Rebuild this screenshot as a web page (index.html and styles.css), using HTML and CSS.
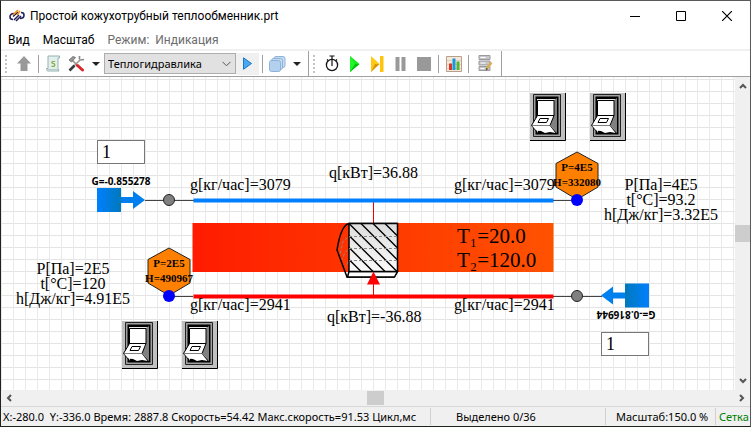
FILE: index.html
```html
<!DOCTYPE html>
<html lang="ru">
<head>
<meta charset="utf-8">
<title>Простой кожухотрубный теплообменник.prt</title>
<link rel="stylesheet" href="styles.css">
</head>
<body>
<div class="window">
  <header class="titlebar">
    <svg class="app-icon" width="16" height="14" viewBox="0 0 16 14" fill="none">
      <path d="M5 4.500C2 4.500 1 6 1 8c0 1.500 1 2.500 3 2.500M4 7.500 9 3M5 11 10 6M7 12l5-5M11 9.500c3 0 4-1.500 4-3.500 0-1.500-1-2.500-3-2.500" stroke="#25245e" stroke-width="1.600"/>
      <path d="M4 6 9 1M8 6l3-4" stroke="#ee8c1e" stroke-width="1.600"/>
    </svg>
    <h1 class="title">Простой кожухотрубный теплообменник.prt</h1>
    <div class="window-controls">
      <button class="window-button" aria-label="Свернуть"><svg width="10" height="10"><path d="M0 5.500h10" stroke="#000"/></svg></button>
      <button class="window-button" aria-label="Развернуть"><svg width="10" height="10"><path d="M.5 .5h9v9h-9z" fill="none" stroke="#000"/></svg></button>
      <button class="window-button" aria-label="Закрыть"><svg width="10" height="10"><path d="M0 0l10 10M10 0 0 10" stroke="#000" stroke-width="1.200"/></svg></button>
    </div>
  </header>

  <nav class="menu">
    <button class="menu-item">Вид</button>
    <button class="menu-item">Масштаб</button>
    <button class="menu-item" disabled>Режим:&nbsp; Индикация</button>
  </nav>

  <div class="toolbars">
    <div class="toolbar">
      <span class="grip"></span>
      <button class="tool" aria-label="Вверх"><svg width="14" height="16" viewBox="0 0 14 16"><path d="M7 0l7 7.500h-3.500V15h-7V7.500H0z" fill="#999"/></svg></button>
      <span class="separator"></span>
      <button class="tool" aria-label="Скрипт"><svg width="15" height="17" viewBox="0 0 15 17"><path d="M2 1h11.500v2H12v10.500l1 2.500H1.500L.5 13.500H2z" fill="#e3efed" stroke="#94b1b1"/><path d="M2 14.500h10" stroke="#b8cccc"/><path d="M9 6.500H7q-1.800.2-1 1.500L8.500 9q1 1.800-.8 2.300H5.500" fill="none" stroke="#86ad3f" stroke-width="1.200"/></svg></button>
      <button class="tool" aria-label="Инструменты"><svg width="17" height="17" viewBox="0 0 17 17" fill="none"><path d="M3 14 12.500 4.500" stroke="#999" stroke-width="1.600"/><path d="M1.500 15.500 6.500 10.500" stroke="#3b3b3b" stroke-width="2.600"/><path d="M11.500 4.500V1M12.500 5l3.500-.5" stroke="#888" stroke-width="1.600"/><path d="M4 5 9 10" stroke="#a08c7c" stroke-width="1.600"/><path d="M1 5 5 1.500l2.500 1L3.500 7z" fill="#999" stroke="#666" stroke-width=".8"/><path d="M9.500 10.500l5 4.500" stroke="#d8262b" stroke-width="3" stroke-linecap="round"/></svg></button>
      <button class="tool-menu" aria-label="Меню инструментов"><svg width="8" height="4"><path d="M0 0h8L4 4z" fill="#222"/></svg></button>
      <div class="select-box">
        <select class="select" aria-label="Решатель"><option>Теплогидравлика</option></select>
        <svg class="chevron" width="9" height="6" viewBox="0 0 9 6"><path d="M.5 .8l4 4 4-4" fill="none" stroke="#555"/></svg>
      </div>
      <button class="tool tool-shaded" aria-label="Выполнить"><svg width="9" height="13" viewBox="0 0 9 13"><path d="M.5 .8v11.500L8.500 6.500z" fill="#48a8f0" stroke="#1e76c8"/></svg></button>
      <span class="separator"></span>
      <button class="tool" aria-label="Слои"><svg width="17" height="16" viewBox="0 0 17 16" stroke="#8fb3d8"><rect x="5" y=".5" width="11" height="11" rx="2" fill="#c5dcf2"/><rect x="2.500" y="2.500" width="11" height="11" rx="2" fill="#c5dcf2"/><rect x=".5" y="4.500" width="11" height="11" rx="2" fill="#b3d1ef"/></svg></button>
      <button class="tool-menu" aria-label="Меню слоев"><svg width="8" height="4"><path d="M0 0h8L4 4z" fill="#222"/></svg></button>
    </div>
    <div class="toolbar toolbar-last">
      <span class="grip"></span>
      <button class="tool" aria-label="Таймер"><svg width="14" height="17" viewBox="0 0 14 17" fill="none" stroke="#111"><circle cx="7" cy="10" r="5.600" stroke-width="1.300"/><path d="M4.500 1h5M7 1v10M2 4.500l1 1M12 4.500l-1 1" stroke-width="1.200"/></svg></button>
      <button class="tool" aria-label="Пуск"><svg width="10" height="16" viewBox="0 0 10 16"><path d="M0 0l9.500 8L0 16z" fill="#16e81d"/><path d="M0 16l9.500-8H0z" fill="#08be10"/><path d="M0 0v16l5-8z" fill="#20f828"/></svg></button>
      <button class="tool" aria-label="Шаг"><svg width="13" height="16" viewBox="0 0 13 16"><path d="M0 0l8.500 8L0 16z" fill="#ffc814"/><path d="M0 16l8.500-8H4z" fill="#d9980a"/><path d="M9 0h3.500v16H9z" fill="#ffc40c"/></svg></button>
      <button class="tool" aria-label="Пауза"><svg width="11" height="14"><path d="M.5 0h4v14h-4zM6.500 0h4v14h-4z" fill="#999"/></svg></button>
      <button class="tool" aria-label="Стоп"><svg width="14" height="14"><path d="M0 0h14v14H0z" fill="#999"/></svg></button>
      <span class="separator"></span>
      <button class="tool" aria-label="График"><svg width="16" height="16" viewBox="0 0 16 16"><path d="M.5 .5h15v15H.5z" fill="#f3e8dc" stroke="#b99e8a"/><path d="M1 4.500h14M1 8.500h14M1 12.500h14" stroke="#e2cfbd"/><path d="M3 7.500h3V14H3z" fill="#e03526"/><path d="M6.500 2.500h3V14h-3z" fill="#1499dd"/><path d="M10.500 5.500h3V14h-3z" fill="#55b335"/></svg></button>
      <span class="separator"></span>
      <button class="tool tool-wide" aria-label="База данных"><svg width="15" height="17" viewBox="0 0 15 17"><path d="M1 .5h11v4H1zM1 6h11v4H1zM1 11.500h11v4H1z" fill="#c6c6ca" stroke="#9a9aa0"/><path d="M2.500 2.500h5M2.500 8h5M2.500 13.500h4" stroke="#fff"/><path d="M13.500 7.500 8.500 14" stroke="#d8b04a" stroke-width="2.400"/><path d="M8.500 13l-1 2.500 2.500-1.500z" fill="#333"/></svg></button>
    </div>
  </div>

  <main class="workspace">
    <div class="sheet">
      <svg class="scheme" width="733" height="313" viewBox="1 77 733 313">
        <defs>
          <linearGradient id="wall"><stop offset="0" stop-color="#ff1c00"/><stop offset="1" stop-color="#ff5200"/></linearGradient>
          <linearGradient id="source"><stop offset="0" stop-color="#0080ff"/><stop offset="1" stop-color="#0078bc"/></linearGradient>
          <linearGradient id="metal" x1="0" y1="0" x2="0" y2="1"><stop offset="0" stop-color="#ddd"/><stop offset="1" stop-color="#fafafa"/></linearGradient>
          <g id="boundary">
            <path d="M0 -12h24v24H0z" fill="url(#source)"/>
            <path d="M24 -3h12v-6l12 9-12 9V3H24z" fill="#0080ee"/>
          </g>
          <path id="node" d="M0 -47.500 21 -36v23.500L0 0l-21-12.500V-36z" fill="#ff8000" stroke="#222"/>
        </defs>

        <path d="M192.500 223h361v49h-361z" fill="url(#wall)"/>
        <path d="M145 200.500h49M553 200.500h24M169 296.500h24M553 296.500h49" fill="none" stroke="#444"/>
        <path d="M373 202h1v21h-1zM373 283h1v12h-1z" fill="#f00000"/>
        <path d="M193.500 200.500h360" stroke="#0080ff" stroke-width="4"/>
        <path d="M193.500 296.500h360" stroke="#f00" stroke-width="4"/>
        <circle cx="169" cy="200" r="5.500" fill="#808080" stroke="#222"/>
        <circle cx="577" cy="296" r="5.500" fill="#808080" stroke="#222"/>
        <use href="#boundary" x="97" y="200"/>
        <use href="#boundary" transform="translate(649 295.500) scale(-1 1)"/>

        <path d="M349 223.500h48V272l-3 5h-47l-10-27q4-25 12-26.500z" fill="none" stroke="#000" stroke-width="1.500"/>
        <path d="M349 271.500h48.500l-3 5.500h-47z" fill="#fff" stroke="#000" stroke-width="1.500"/>
        <path d="M349 223.500h48.500v48H349z" fill="url(#metal)" stroke="#000" stroke-width="1.500"/>
        <path d="M349 223.500l48 48M361 223.500l36 36M373 223.500l24 24M385 223.500l12 12M349 235.500l36 36M349 247.500l24 24M349 259.500l12 12" stroke="#000" stroke-width="1.400"/>
        <path d="M397 236.500h-48l-6 5-3 13M397 248.500h-48l-4 4-3 7M397 260.500h-48l-4 7" fill="none" stroke="#888" stroke-dasharray="3 2"/>
        <path d="M373.500 271.500l6.500 13h-13z" fill="#f00"/>

        <use href="#node" x="577" y="199.500"/>
        <use href="#node" x="169" y="295.500"/>
        <circle cx="577" cy="200" r="6" fill="#00f"/>
        <circle cx="169" cy="296" r="6" fill="#00f"/>

        <g class="value">
          <text x="190" y="190">g[кг/час]=3079</text>
          <text x="454" y="190">g[кг/час]=3079</text>
          <text x="190" y="310">g[кг/час]=2941</text>
          <text x="454" y="310">g[кг/час]=2941</text>
          <text x="329" y="178">q[кВт]=36.88</text>
          <text x="327" y="322">q[кВт]=-36.88</text>
        </g>
        <g class="value centered">
          <text x="661" y="190">P[Па]=4E5</text>
          <text x="661" y="205">t[°C]=93.2</text>
          <text x="661" y="220">h[Дж/кг]=3.32E5</text>
          <text x="73" y="274">P[Па]=2E5</text>
          <text x="73" y="289">t[°C]=120</text>
          <text x="73" y="304">h[Дж/кг]=4.91E5</text>
        </g>
        <g class="temperature">
          <text x="457" y="243">T₁=20.0</text>
          <text x="457" y="267">T₂=120.0</text>
        </g>
        <g class="node-value centered">
          <text x="577" y="171">P=4E5</text>
          <text x="577" y="186">H=332080</text>
          <text x="169" y="267">P=2E5</text>
          <text x="169" y="282">H=490967</text>
        </g>
        <g class="flow-value centered">
          <text x="121" y="185">G=-0.855278</text>
          <text transform="translate(626 311) rotate(180)">G=-0.816944</text>
        </g>
      </svg>

      <input class="number number-hot" aria-label="Задание 1" value="1">
      <input class="number number-cold" aria-label="Задание 2" value="1">

      <svg class="symbols" width="0" height="0">
        <symbol id="rocker" viewBox="0 0 36 48">
          <path d="M0 0h36v48H0z" fill="#c0c0c0"/>
          <path d="M35.500 0v47.500H0" fill="none" stroke="#000"/>
          <path d="M3.500 1.500h27v42h-27z" fill="#a0a0a0" stroke="#222"/>
          <path d="M5.500 3.500h23v38h-23z" fill="#000"/>
          <path d="M7 6h20v34H7z" fill="#e8e8e8"/>
          <path d="M24 7l3-2v35l-7-8z" fill="#808080"/>
          <path d="M7 40l2-4h14l4 4z" fill="#000"/>
          <path d="M7.500 7.500h16.500v15H7.500z" fill="#fff" stroke="#000"/>
          <path d="M7.500 22.500h16.500l-4 10H1.500z" fill="#fff" stroke="#000"/>
          <path d="M10 25.500h8.500l-2 4H8z" fill="#fff" stroke="#000"/>
          <path d="M1.500 32.500H20l6 7.500-6-1-5 1-4-2-5-.5z" fill="#fff"/>
          <path d="M20 32.500l6 7.500M1.500 32.500l5 6" stroke="#000" stroke-width=".8"/>
        </symbol>
      </svg>
      <button class="rocker rocker-a" aria-label="Клапан 1"><svg width="36" height="48"><use href="#rocker"/></svg></button>
      <button class="rocker rocker-b" aria-label="Клапан 2"><svg width="36" height="48"><use href="#rocker"/></svg></button>
      <button class="rocker rocker-c" aria-label="Клапан 3"><svg width="36" height="48"><use href="#rocker"/></svg></button>
      <button class="rocker rocker-d" aria-label="Клапан 4"><svg width="36" height="48"><use href="#rocker"/></svg></button>
    </div>
    <div class="scroll scroll-vertical">
      <svg width="8" height="6" viewBox="0 0 8 6"><path d="M1 5l3-3 3 3" fill="none" stroke="#555" stroke-width="2"/></svg>
      <span class="thumb"></span>
      <svg width="8" height="6" viewBox="0 0 8 6"><path d="M1 1l3 3 3-3" fill="none" stroke="#555" stroke-width="2"/></svg>
    </div>
    <div class="scroll scroll-horizontal">
      <svg width="6" height="8" viewBox="0 0 6 8"><path d="M5 1L2 4l3 3" fill="none" stroke="#555" stroke-width="2"/></svg>
      <span class="thumb"></span>
      <svg width="6" height="8" viewBox="0 0 6 8"><path d="M1 1l3 3-3 3" fill="none" stroke="#555" stroke-width="2"/></svg>
    </div>
  </main>

  <footer class="status">
    <span class="status-cell status-main">X:-280.0&nbsp; Y:-336.0 Время: 2887.8 Скорость=54.42 Макс.скорость=91.53 Цикл,мс</span>
    <span class="status-cell status-selection">Выделено 0/36</span>
    <span class="status-cell status-zoom">Масштаб:150.0 %</span>
    <span class="status-cell status-grid">Сетка</span>
  </footer>
</div>
</body>
</html>
```
FILE: styles.css
```css
* {
  box-sizing: border-box;
}

body {
  margin: 0;
  font: 12px/16px Roboto, "Open Sans", sans-serif;
  color: #000;
}

button {
  padding: 0;
  border: 0;
  background: none;
  font: inherit;
  color: inherit;
}

svg {
  display: block;
  flex: none;
}

.window {
  display: flex;
  flex-direction: column;
  min-height: 100vh;
  border: 1px solid #5a5a5a;
  border-left-color: #1c241c;
  border-bottom-color: #1c241c;
  background: #fff;
}

.titlebar {
  display: flex;
  align-items: center;
  height: 30px;
  padding-left: 8px;
}

.title {
  flex: 1;
  margin: 0 0 0 5px;
  font-size: 12px;
  font-weight: 400;
  white-space: nowrap;
}

.window-controls {
  display: flex;
}

.window-button {
  display: grid;
  place-items: center;
  width: 46px;
  height: 28px;
}

.menu {
  display: flex;
  gap: 13px;
  height: 20px;
  padding: 1px 7px;
  border-bottom: 2px solid #f0f0f0;
}

.menu-item:disabled {
  color: #6d6d6d;
}

.toolbars {
  display: flex;
  height: 26px;
  border-bottom: 1px solid #a0a0a0;
}

.toolbar {
  display: flex;
  align-items: center;
  padding: 0 3px;
  border-right: 1px solid #a0a0a0;
}

.grip {
  width: 2px;
  height: 18px;
  margin: 0 5px 0 1px;
  background: repeating-linear-gradient(#c4c4c4 0 2px, #fff 2px 4px);
}

.separator {
  width: 1px;
  height: 18px;
  margin: 0 3px;
  background: #a0a0a0;
}

.tool,
.tool-menu {
  display: grid;
  place-items: center;
  width: 23px;
  height: 22px;
}

.tool-menu {
  width: 16px;
}

.tool-wide {
  width: 26px;
}

.tool-shaded {
  background: #f0f0f0;
}

.select-box {
  position: relative;
}

.select {
  display: block;
  width: 132px;
  height: 21px;
  padding: 0 3px;
  border: 1px solid #adadad;
  border-radius: 0;
  background: #e1e1e1;
  color: #000;
  font: 11px/16px "Noto Sans", "Open Sans", sans-serif;
  appearance: none;
}

.chevron {
  position: absolute;
  top: 8px;
  right: 5px;
  pointer-events: none;
}

.workspace {
  display: grid;
  flex: 1;
  grid-template-columns: 1fr 15px;
  grid-template-rows: 1fr 16px;
}

.sheet {
  position: relative;
  overflow: hidden;
  min-height: 313px;
  background:
    repeating-linear-gradient(90deg, #e9e9e9 0 1px, transparent 1px 12px),
    repeating-linear-gradient(transparent 0 2px, #e4e4e4 2px 3px, transparent 3px 12px);
}

.symbols {
  position: absolute;
}

.value,
.temperature,
.node-value {
  font-family: "Liberation Serif", serif;
}

.value {
  font-size: 16px;
}

.temperature {
  font-size: 21px;
}

.node-value {
  font-size: 11px;
  font-weight: 700;
}

.flow-value {
  font-family: "Open Sans", sans-serif;
  font-size: 10px;
  font-weight: 700;
}

.centered {
  text-anchor: middle;
}

.number {
  position: absolute;
  width: 48px;
  height: 24px;
  padding: 0 4px;
  border: 1px solid #777;
  background: #fff;
  color: #000;
  font: 18px/22px "Liberation Serif", serif;
}

.number-hot {
  left: 96px;
  top: 63px;
}

.number-cold {
  left: 600px;
  top: 255px;
}

.rocker {
  position: absolute;
}

.rocker-a {
  left: 529px;
  top: 16px;
}

.rocker-b {
  left: 589px;
  top: 16px;
}

.rocker-c {
  left: 121px;
  top: 244px;
}

.rocker-d {
  left: 181px;
  top: 244px;
}

.scroll {
  display: flex;
  align-items: center;
  justify-content: space-between;
  background: #f0f0f0;
}

.scroll-vertical {
  flex-direction: column;
  padding: 6px 0;
}

.scroll-horizontal {
  grid-column: 1 / -1;
  padding: 0 5px;
}

.thumb {
  width: 15px;
  height: 17px;
  background: #cdcdcd;
}

.scroll-horizontal .thumb {
  width: 17px;
  height: 14px;
}

.status {
  display: grid;
  grid-template-columns: 430px 1fr 110px 34px;
  height: 20px;
  padding: 1px 0;
  border-top: 1px solid #d7d7d7;
  background: #f0f0f0;
  font: 11px/17px "Noto Sans", "Open Sans", sans-serif;
}

.status-cell {
  overflow: hidden;
  border-right: 1px solid #d0d0d0;
  white-space: nowrap;
}

.status-main {
  padding-left: 2px;
}

.status-selection {
  padding-left: 25px;
}

.status-zoom {
  padding-left: 10px;
}

.status-grid {
  padding-left: 3px;
  border-right: 0;
  color: #008000;
}
```
